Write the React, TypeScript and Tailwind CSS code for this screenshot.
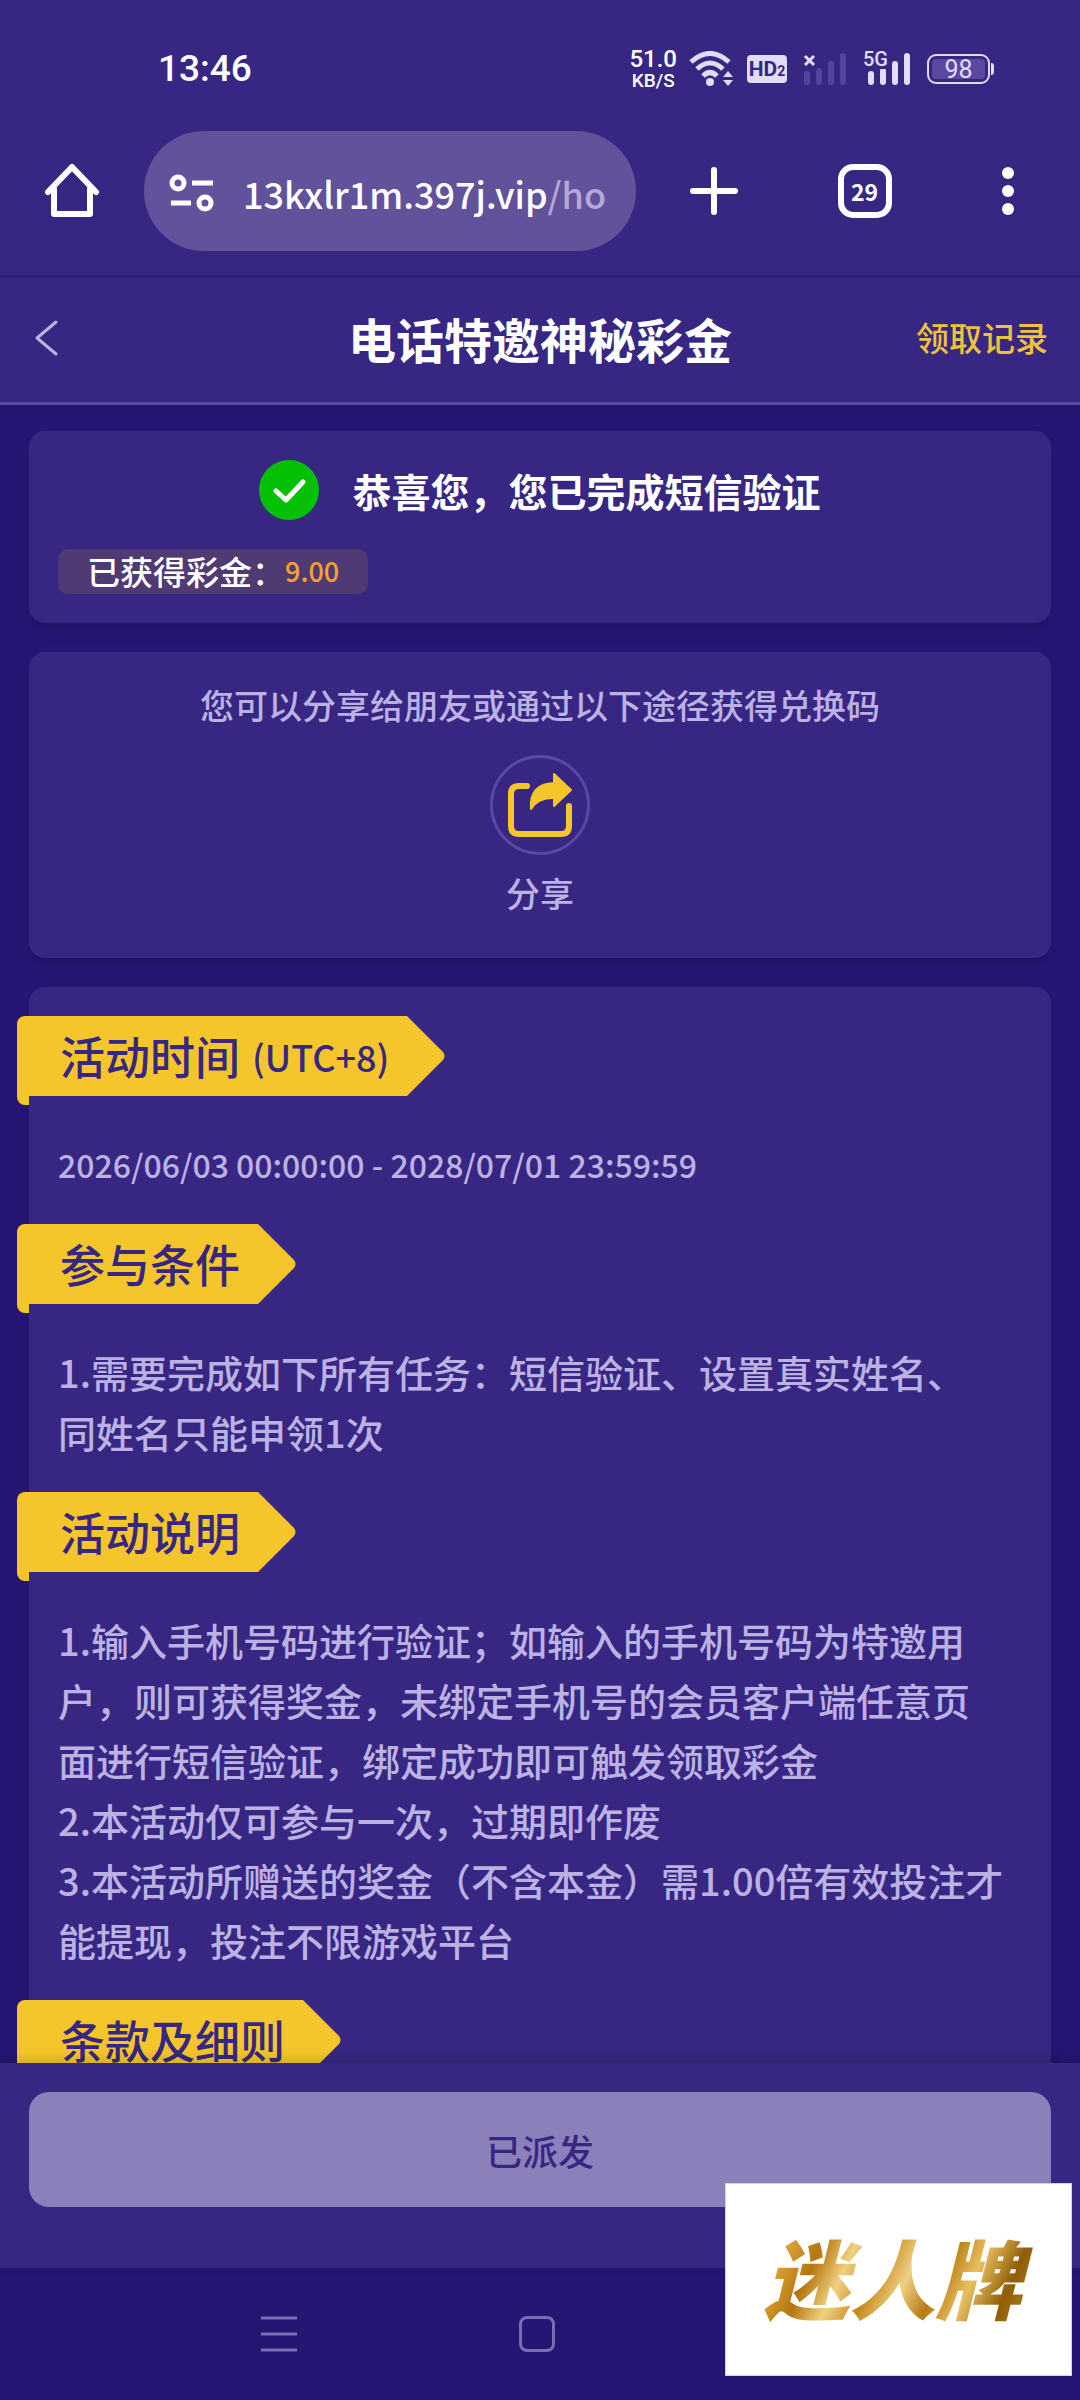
import { ReactNode } from "react";

const sections = [
  {
    title: "活动时间",
    note: "(UTC+8)",
    period: "2026/06/03 00:00:00 - 2028/07/01 23:59:59",
    lines: [],
  },
  {
    title: "参与条件",
    lines: [
      "1.需要完成如下所有任务：短信验证、设置真实姓名、",
      "同姓名只能申领1次",
    ],
  },
  {
    title: "活动说明",
    lines: [
      "1.输入手机号码进行验证；如输入的手机号码为特邀用",
      "户，则可获得奖金，未绑定手机号的会员客户端任意页",
      "面进行短信验证，绑定成功即可触发领取彩金",
      "2.本活动仅可参与一次，过期即作废",
      "3.本活动所赠送的奖金（不含本金）需1.00倍有效投注才",
      "能提现，投注不限游戏平台",
    ],
  },
  { title: "条款及细则", lines: [] },
];

const StatusBar = () => (
  <div className="flex h-[131px] items-start justify-between pr-[86px] pl-[158px] pt-[46px] font-['Roboto','Liberation_Sans',sans-serif] text-white">
    <span className="text-[37px] leading-[46px] font-medium">13:46</span>
    <div className="flex h-[46px] items-center text-[#e2dcf7]">
      <div className="mr-3 flex flex-col items-center font-medium text-white">
        <span className="text-[24px] leading-[24px]">51.0</span>
        <span className="text-[19px] leading-[20px]">KB/S</span>
      </div>
      <svg width="46" height="36" viewBox="0 0 46 36" fill="none">
        <path
          d="M2 11 Q21 -6 40 11 M8 18 Q21 6 34 18 M14 25 Q21 18 28 25"
          stroke="currentColor"
          strokeWidth="5"
        />
        <circle cx="21" cy="31" r="4" fill="currentColor" />
        <path d="M34 26 L39 20 L44 26Z M34 29 L39 35 L44 29Z" fill="currentColor" />
      </svg>
      <span className="ml-3 flex h-7 w-10 items-center justify-center rounded bg-[#e2dcf7] text-[21px] leading-7 font-bold text-[#372783]">
        HD<span className="pt-1 text-[14px]">2</span>
      </span>
      <svg className="ml-4" width="44" height="32" viewBox="0 0 44 32">
        <path d="M2 3 L11 12 M11 3 L2 12" stroke="currentColor" strokeWidth="3" />
        <path
          d="M4 21V29 M16 18V29 M28 11V29 M40 3V29"
          stroke="#5543a0"
          strokeWidth="6"
          strokeLinecap="round"
        />
      </svg>
      <div className="relative ml-4">
        <svg width="48" height="32" viewBox="0 0 48 32">
          <path
            d="M8 21V29 M20 18V29 M32 11V29 M44 3V29"
            stroke="currentColor"
            strokeWidth="6"
            strokeLinecap="round"
          />
        </svg>
        <span className="absolute -top-1 left-0 bg-[#372783] text-[20px] leading-5 font-medium">
          5G
        </span>
      </div>
      <div className="ml-4 flex items-center gap-px">
        <div className="flex h-[30px] w-[63px] rounded-[9px] border-2 border-[#e2dcf7] p-[3px]">
          <span className="flex-1 rounded bg-[#5a48a3] text-center text-[25px] leading-[21px]">
            98
          </span>
        </div>
        <div className="h-3 w-[3px] rounded-r bg-[#e2dcf7]" />
      </div>
    </div>
  </div>
);

const BrowserBar = () => (
  <div className="flex items-center border-b-[3px] border-[#2e1f78] pr-[54px] pb-6 pl-[44px] text-white">
    <button aria-label="主页">
      <svg width="56" height="56" viewBox="0 0 56 56" fill="none" stroke="currentColor">
        <path
          d="M4 29 L28 4 L52 29 M10 26 V51 H46 V26"
          strokeWidth="6"
          strokeLinejoin="round"
          strokeLinecap="round"
        />
      </svg>
    </button>
    <div className="ml-[44px] flex h-[120px] w-[492px] items-center gap-7 rounded-full bg-[#62529b] pt-1 pl-[25px]">
      <svg
        className="shrink-0"
        width="46"
        height="40"
        viewBox="0 0 46 40"
        fill="none"
        stroke="currentColor"
        strokeWidth="5"
      >
        <circle cx="9" cy="10" r="6" />
        <path d="M23 10H44 M2 30H22" />
        <circle cx="36" cy="30" r="6" />
      </svg>
      <p className="font-['Noto_Sans_CJK_SC',sans-serif] text-[36px] font-medium whitespace-nowrap">
        13kxlr1m.397j.vip
        <span className="text-[#b3a8d6]">/ho</span>
      </p>
    </div>
    <div className="flex flex-1 items-center justify-between pl-[53px]">
      <button aria-label="新标签页">
        <svg width="50" height="50" viewBox="0 0 50 50" stroke="currentColor">
          <path d="M25 4V46 M4 25H46" strokeWidth="6" strokeLinecap="round" />
        </svg>
      </button>
      <button className="flex size-[54px] items-center justify-center rounded-[15px] border-[6px] border-white text-[23px] font-bold">
        29
      </button>
      <button aria-label="更多" className="flex w-9 flex-col items-center gap-[6px]">
        <span className="size-3 rounded-full bg-white" />
        <span className="size-3 rounded-full bg-white" />
        <span className="size-3 rounded-full bg-white" />
      </button>
    </div>
  </div>
);

const PageHeader = () => (
  <header className="grid h-[127px] grid-cols-[1fr_auto_1fr] items-center border-b-[3px] border-[#5a48a3] px-8 pb-1">
    <button aria-label="返回" className="justify-self-start text-[#bcb1e3]">
      <svg width="28" height="38" viewBox="0 0 28 38" fill="none">
        <path
          d="M24 3 L5 19 L24 35"
          stroke="currentColor"
          strokeWidth="3"
          strokeLinecap="round"
          strokeLinejoin="round"
        />
      </svg>
    </button>
    <h1 className="text-[48px] leading-[60px] font-bold text-white">电话特邀神秘彩金</h1>
    <a href="#records" className="justify-self-end text-[33px] font-medium text-[#efc23a]">
      领取记录
    </a>
  </header>
);

const Card = ({ children, className }: { children: ReactNode; className: string }) => (
  <section className={`rounded-[16px] bg-[#372783] shadow-lg ${className}`}>{children}</section>
);

const Ribbon = ({ title, note }: { title: string; note?: string }) => (
  <div className="-ml-3 w-fit">
    <div className="flex h-20">
      <h2 className="flex items-center gap-3 rounded-tl-[8px] bg-[#f5c62b] pl-[43px] text-[45px] font-medium text-[#372783]">
        {title}
        {note && <span className="text-[36px]">{note}</span>}
      </h2>
      <svg width="56" height="80" viewBox="0 0 56 80" fill="#f5c62b">
        <path d="M0 0H18L54 36Q57 40 54 44L18 80H0Z" />
      </svg>
    </div>
    <div className="h-[9px] w-3 rounded-bl-[8px] bg-[#f5c62b]" />
  </div>
);

const App = () => {
  return (
    <div className="relative flex h-screen flex-col bg-[#271574] font-['Noto_Sans_CJK_SC',sans-serif]">
      <div className="bg-[#372783]">
        <StatusBar />
        <BrowserBar />
        <PageHeader />
      </div>

      <main className="flex min-h-0 flex-1 flex-col gap-[29px] overflow-y-auto px-[29px] pt-[26px] [scrollbar-width:none]">
        <Card className="shrink-0 p-[29px]">
          <div className="flex items-center justify-center gap-8">
            <svg width="61" height="61" viewBox="0 0 61 61" fill="none">
              <circle cx="30" cy="30" r="30" fill="#06c006" />
              <path
                d="M17 31 L27 40 L44 22"
                stroke="white"
                strokeWidth="5"
                strokeLinecap="round"
                strokeLinejoin="round"
              />
            </svg>
            <p className="text-[39px] leading-[61px] font-bold text-white">
              恭喜您，您已完成短信验证
            </p>
          </div>
          <p className="mt-7 flex h-[45px] w-fit items-center rounded-[10px] bg-[#4f3a73] px-[29px] text-[33px] font-medium text-white">
            已获得彩金：
            <span className="text-[27px] text-[#faa32a]">9.00</span>
          </p>
        </Card>

        <Card className="flex shrink-0 flex-col items-center pt-[29px] pb-[41px] text-[34px] leading-[48px] text-[#bcb1e3]">
          <p className="font-medium">您可以分享给朋友或通过以下途径获得兑换码</p>
          <button className="mt-[26px] flex flex-col items-center gap-[14px]">
            <span className="flex size-[100px] items-center justify-center rounded-full border-[3px] border-[#5a48a3]">
              <svg width="66" height="66" viewBox="0 0 66 66" fill="none">
                <path
                  d="M20 14H12Q4 14 4 22V54Q4 62 12 62H54Q62 62 62 54V34"
                  stroke="#f5c62b"
                  strokeWidth="6"
                  strokeLinecap="round"
                />
                <path
                  d="M47 2L64 18L47 34V26Q31 25 24 37Q22 12 47 11Z"
                  fill="#f5c62b"
                  stroke="#f5c62b"
                  strokeWidth="2"
                  strokeLinejoin="round"
                />
              </svg>
            </span>
            <span className="font-medium">分享</span>
          </button>
        </Card>

        <Card className="shrink-0 pt-[29px]">
          {sections.map((section) => (
            <div key={section.title}>
              <Ribbon title={section.title} note={section.note} />
              <div className="px-[29px] pt-[29px] pb-[30px] text-[38px] leading-[60px] font-medium whitespace-nowrap text-[#bcb1e3]">
                {section.period && <p className="text-[32px] leading-[60px]">{section.period}</p>}
                {section.lines.map((line) => (
                  <p key={line}>{line}</p>
                ))}
              </div>
            </div>
          ))}
        </Card>
      </main>

      <footer className="relative bg-[#372783] px-[29px] pt-[29px] pb-[61px] shadow-[0_-4px_12px_rgba(0,0,0,0.15)]">
        <button className="h-[115px] w-full rounded-[20px] bg-[#8b80ba] text-[36px] font-medium text-[#372783]">
          已派发
        </button>
      </footer>

      <nav className="flex h-[132px] items-center gap-[222px] pl-[261px] text-[#7a6db3]">
        <button aria-label="最近任务">
          <svg width="36" height="36" viewBox="0 0 36 36" stroke="currentColor">
            <path d="M0 2H36 M0 18H36 M0 34H36" strokeWidth="3" />
          </svg>
        </button>
        <button aria-label="桌面" className="size-9 rounded-[8px] border-[3px] border-[#7a6db3]" />
      </nav>

      {/* brand badge floating over the bottom corner */}
      <div className="absolute right-2 bottom-6 flex h-[193px] w-[347px] items-center justify-center border border-[#d4d0e6] bg-white">
        <span className="bg-[linear-gradient(115deg,#a8700f,#dba035_12%,#b3760e_22%,#f0d080_32%,#c58a1c_42%,#efcf85_52%,#b87a12_62%,#e8c060_72%,#8f5d08_84%,#c8952c)] bg-clip-text pr-4 pb-2 pl-1 text-[86px] leading-[110px] font-black text-transparent italic">
          迷人牌
        </span>
      </div>
    </div>
  );
};

export default App;
